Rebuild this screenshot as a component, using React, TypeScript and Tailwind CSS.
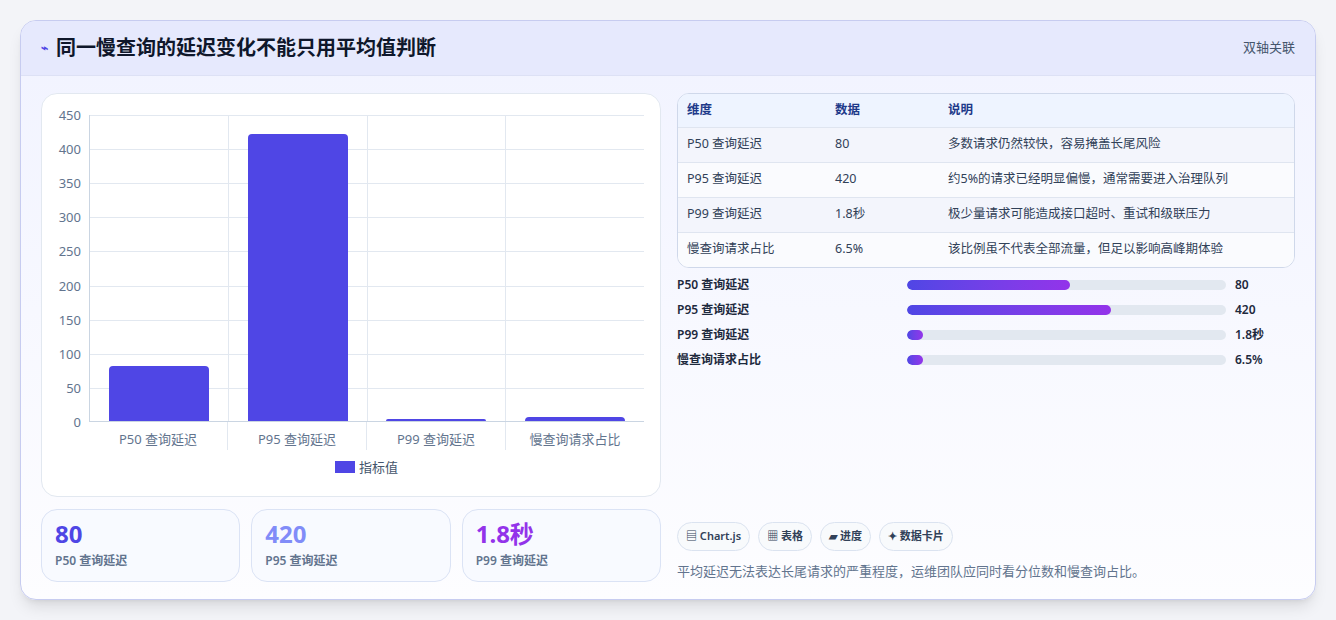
const rows = [
  { name: 'P50 查询延迟', value: '80', desc: '多数请求仍然较快，容易掩盖长尾风险', n: 80 },
  { name: 'P95 查询延迟', value: '420', desc: '约5%的请求已经明显偏慢，通常需要进入治理队列', n: 420 },
  { name: 'P99 查询延迟', value: '1.8秒', desc: '极少量请求可能造成接口超时、重试和级联压力', n: 1.8 },
  { name: '慢查询请求占比', value: '6.5%', desc: '该比例虽不代表全部流量，但足以影响高峰期体验', n: 6.5 },
];

const ticks = [450, 400, 350, 300, 250, 200, 150, 100, 50, 0];

function Chart() {
  const h = 307;
  return (
    <div className="rounded-2xl border border-slate-200 bg-white h-[404px] pt-[21px] px-4">
      <div className="flex">
        <div className="w-[31px] h-[307px] relative text-[13px] text-slate-500">
          {ticks.map((t) => (
            <span key={t} className="absolute right-2 leading-4 -translate-y-1/2" style={{ top: h - (t / 450) * h }}>{t}</span>
          ))}
        </div>
        <div className="flex-1">
          <div className="relative h-[307px] border-l border-b border-slate-300">
            {ticks.slice(0, -1).map((t) => (
              <div key={t} className="absolute left-0 right-0 border-t border-slate-200" style={{ top: h - (t / 450) * h }} />
            ))}
            <div className="absolute inset-0 flex">
              {rows.map((r, i) => (
                <div key={r.name} className={`flex-1 flex items-end justify-center ${i > 0 ? 'border-l border-slate-200' : ''}`}>
                  <div className="w-[100px] bg-[#4f46e5] rounded-t-sm" style={{ height: Math.max((r.n / 450) * h, 2) }} />
                </div>
              ))}
            </div>
          </div>
          <div className="flex text-[13px] text-slate-500">
            {rows.map((r, i) => (
              <div key={r.name} className={`flex-1 text-center pt-2 ${i > 0 ? 'border-l border-slate-200' : ''}`}>{r.name}</div>
            ))}
          </div>
          <div className="flex justify-center items-center gap-1 mt-2 text-[13px] text-slate-600">
            <span className="w-[20px] h-[12px] bg-[#4f46e5]" />指标值
          </div>
        </div>
      </div>
    </div>
  );
}

export default function App() {
  return (
    <div className="min-h-screen bg-[#f3f4f8] p-5 pb-0" style={{ fontFamily: '"Noto Sans", "Noto Sans CJK SC", sans-serif' }}>
      <div className="rounded-2xl border border-[#c7ccf0] bg-gradient-to-b from-[#f1f3ff] to-[#fdfdff] shadow-lg h-[580px] overflow-hidden">
        <div className="h-[55px] bg-[#e6e9fd] flex items-center justify-between px-5 border-b border-[#dde1f5]">
          <h1 className="flex items-center gap-2 text-[20px] font-bold text-slate-900">
            <span className="text-[#4f46e5] text-[12px]">⌁</span>同一慢查询的延迟变化不能只用平均值判断
          </h1>
          <span className="text-[13px] text-slate-600">双轴关联</span>
        </div>
        <div className="flex gap-4 p-5 pt-[17px]">
          <div className="w-[620px] flex flex-col gap-3">
            <Chart />
            <div className="grid grid-cols-3 gap-[11px]">
              {[
                { v: '80', c: 'text-[#4f46e5]', l: 'P50 查询延迟' },
                { v: '420', c: 'text-[#818cf8]', l: 'P95 查询延迟' },
                { v: '1.8秒', c: 'text-[#9333ea]', l: 'P99 查询延迟' },
              ].map((s) => (
                <div key={s.l} className="h-[73px] rounded-2xl border border-[#dbe3f5] bg-[#f8faff] px-[13px] pt-[8px]">
                  <div className={`text-[24px] font-bold leading-8 ${s.c}`}>{s.v}</div>
                  <div className="text-[12px] font-semibold text-slate-500 mt-[2px]">{s.l}</div>
                </div>
              ))}
            </div>
          </div>
          <div className="flex-1 flex flex-col">
            <div className="rounded-xl border border-[#cfd8ea] overflow-hidden bg-white">
              <table className="w-full text-[12.5px] text-slate-700">
                <thead>
                  <tr className="bg-[#eef4ff] text-[#1e3a8a] text-left h-[33px]">
                    <th className="pl-[9px] w-[157px] font-semibold">维度</th>
                    <th className="w-[113px] font-semibold">数据</th>
                    <th className="font-semibold">说明</th>
                  </tr>
                </thead>
                <tbody>
                  {rows.map((r, i) => (
                    <tr key={r.name} className={`h-[35px] border-t border-[#dfe5f0] ${i % 2 === 0 ? 'bg-[#f3f5fc]' : 'bg-[#fafbfe]'}`}>
                      <td className="pl-[9px]">{r.name}</td>
                      <td>{r.value}</td>
                      <td>{r.desc}</td>
                    </tr>
                  ))}
                </tbody>
              </table>
            </div>
            <div className="mt-[8px] flex flex-col gap-[7px]">
              {rows.map((r, i) => {
                const w = [51, 64, 5, 5][i];
                return (
                  <div key={r.name} className="flex items-center h-[18px] text-[12px] font-semibold text-slate-800">
                    <div className="w-[230px]">{r.name}</div>
                    <div className="w-[319px] h-[10px] rounded-full bg-[#e2e8f0] overflow-hidden">
                      <div className="h-full rounded-full bg-gradient-to-r from-[#4f46e5] to-[#9333ea]" style={{ width: `${w}%` }} />
                    </div>
                    <div className="pl-[9px]">{r.value}</div>
                  </div>
                );
              })}
            </div>
            <div className="mt-auto">
              <div className="flex gap-2 text-[11px] font-semibold text-slate-700">
                {['▤ Chart.js', '▦ 表格', '▰ 进度', '✦ 数据卡片'].map((t) => (
                  <span key={t} className="h-[29px] px-2 flex items-center rounded-full border border-[#dbe3f0] bg-[#f8fafc]">{t}</span>
                ))}
              </div>
              <p className="text-[13px] text-slate-500 mt-[11px] mb-[1px]">平均延迟无法表达长尾请求的严重程度，运维团队应同时看分位数和慢查询占比。</p>
            </div>
          </div>
        </div>
      </div>
    </div>
  );
}
